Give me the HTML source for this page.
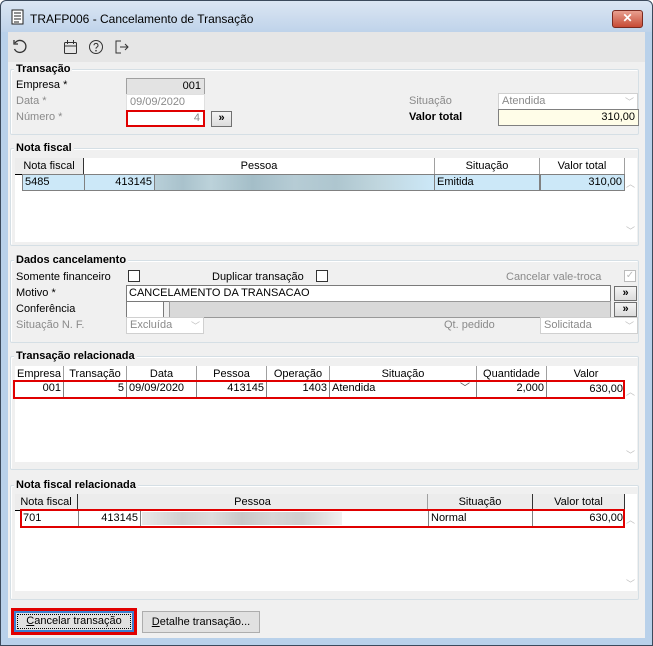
<!DOCTYPE html>
<html><head><meta charset="utf-8"><style>
*{box-sizing:border-box;margin:0;padding:0}
body{width:653px;height:646px;overflow:hidden;background:#fff;font-family:"Liberation Sans",sans-serif;font-size:11px;color:#000;position:relative}
.a{position:absolute}
.win{left:0;top:0;width:653px;height:646px;background:#b9d1ea;border:1px solid #3c4a5c;border-radius:6px 6px 0 0}
.title{left:1px;top:1px;width:651px;height:31px;background:linear-gradient(#dbe6f3,#bfd3ea);border-radius:6px 6px 0 0}
.client{left:8px;top:32px;width:637px;height:606px;background:#f0f0f0}
.tool{left:8px;top:32px;width:637px;height:30px;background:#e6e6e6}
.grp{border:1px solid #d5dfe5;border-radius:2px;box-shadow:inset 1px 1px 0 #fff}
.gt{font-weight:bold;background:#f0f0f0;padding:0 2px;font-size:11px}
.l{white-space:nowrap}
.g{color:#8a8a8a}
.in{background:#fff;border:1px solid #7a7a7a;height:17px;line-height:15px;padding:0 3px;white-space:nowrap;overflow:hidden}
.btn{background:linear-gradient(#f4f4f4,#dcdcdc);border:1px solid #707070;text-align:center;font-weight:bold;line-height:13px;font-size:11px}
.grid{background:#fff}
.h{background:#fff;border-right:1px solid #a0a0a0;text-align:center;height:16px;line-height:16px;white-space:nowrap}
.c{border:1px solid #808080;border-width:1px 1px 1px 0;height:17px;line-height:15px;padding:0 2px;white-space:nowrap}
.r{text-align:right}
.sel{background:#cce8f8}
.blur{background:linear-gradient(90deg,#b8cfd8 0,#a9c2cc 10%,#bcd2da 20%,#a4bec8 35%,#b6ccd5 50%,#aec6cf 65%,#c0d6de 80%,#cce8f8 100%)}
.blurg{background:linear-gradient(90deg,#e8e8e8 0,#d0d0d0 20%,#dcdcdc 35%,#c8c8c8 50%,#d6d6d6 65%,#cfcfcf 80%,#f0f0f0 100%)}
.chk{width:12px;height:12px;border:1px solid #333;background:#fff}
.arr{color:#c0c0c0;font-size:9px}
</style></head><body>
<div class="a win"></div>
<div class="a title"></div>
<svg class="a" style="left:11px;top:9px" width="14" height="16"><rect x="1" y="1" width="11" height="14" fill="#fff" stroke="#222"/><path d="M3 4h7M3 7h7M3 10h7M3 13h5" stroke="#222"/></svg>
<div class="a l" style="left:30px;top:12px;font-size:12px;color:#000">TRAFP006 - Cancelamento de Transação</div>
<div class="a" style="left:612px;top:10px;width:31px;height:18px;background:linear-gradient(#e8a090,#c74a35);border:1px solid #7a2a20;border-radius:3px;color:#fff;text-align:center;font-weight:bold;line-height:15px;font-size:12px">✕</div>
<div class="a client"></div>
<div class="a tool"></div>
<svg class="a" style="left:12px;top:39px" width="16" height="16"><path d="M3 4A6 6 0 1 1 2.5 10" fill="none" stroke="#333" stroke-width="1.3"/><path d="M2 1v4h4" fill="none" stroke="#333" stroke-width="1.3"/></svg>
<svg class="a" style="left:63px;top:39px" width="15" height="16"><rect x="1.5" y="3.5" width="12" height="11" rx="1" fill="none" stroke="#333"/><path d="M1.5 7h12M4.5 1v4M10.5 1v4" stroke="#333"/></svg>
<svg class="a" style="left:88px;top:39px" width="16" height="16"><circle cx="8" cy="8" r="6.5" fill="none" stroke="#333"/><path d="M6 6.3a2 2 0 1 1 2.7 1.9c-.6.3-.7.7-.7 1.5" fill="none" stroke="#333"/><circle cx="8" cy="11.7" r=".8" fill="#333"/></svg>
<svg class="a" style="left:114px;top:39px" width="16" height="16"><path d="M7 2H2v12h5" fill="none" stroke="#333"/><path d="M6 8h8M11 5l3 3-3 3" fill="none" stroke="#333"/></svg>

<!-- Transacao -->
<div class="a grp" style="left:10px;top:69px;width:629px;height:66px"></div>
<div class="a gt" style="left:14px;top:63px">Transação</div>
<div class="a l" style="left:16px;top:79px">Empresa *</div>
<div class="a in r" style="left:126px;top:78px;width:79px;background:#e3e3e3;border-color:#a0a0a0">001</div>
<div class="a l g" style="left:16px;top:95px">Data *</div>
<div class="a in g" style="left:126px;top:94px;width:79px;border-color:#e0e0e0">09/09/2020</div>
<div class="a l g" style="left:16px;top:111px">Número *</div>
<div class="a in r g" style="left:126px;top:110px;width:79px;border:2px solid #e00000;line-height:13px">4</div>
<div class="a btn" style="left:211px;top:111px;width:21px;height:16px">»</div>
<div class="a l g" style="left:409px;top:95px">Situação</div>
<div class="a in g" style="left:498px;top:93px;width:140px;border-color:#d0d0d0">Atendida<span class="a arr" style="right:3px;top:1px">﹀</span></div>
<div class="a l" style="left:409px;top:111px;font-weight:bold">Valor total</div>
<div class="a in r" style="left:498px;top:109px;width:141px;background:#fffde8;border-color:#808080">310,00</div>

<!-- Nota fiscal -->
<div class="a grp" style="left:10px;top:148px;width:629px;height:98px"></div>
<div class="a gt" style="left:14px;top:142px">Nota fiscal</div>
<div class="a grid" style="left:15px;top:158px;width:622px;height:84px"></div>
<div class="a h" style="left:15px;top:158px;width:69px;background:#ececec;border-right:1px solid #333">Nota fiscal</div>
<div class="a h" style="left:84px;top:158px;width:351px">Pessoa</div>
<div class="a h" style="left:435px;top:158px;width:105px">Situação</div>
<div class="a h" style="left:540px;top:158px;width:85px">Valor total</div>
<div class="a" style="left:15px;top:174px;width:7px;height:1px;background:#000"></div>
<div class="a c sel" style="left:22px;top:174px;width:63px;border-left:1px solid #808080">5485</div>
<div class="a c sel r" style="left:85px;top:174px;width:70px">413145</div>
<div class="a c blur" style="left:155px;top:174px;width:280px"></div>
<div class="a c sel" style="left:435px;top:174px;width:105px">Emitida</div>
<div class="a c sel r" style="left:540px;top:174px;width:85px;border-left:1px solid #808080">310,00</div>
<div class="a arr" style="left:626px;top:177px">︿</div>
<div class="a arr" style="left:626px;top:224px">﹀</div>

<!-- Dados cancelamento -->
<div class="a grp" style="left:10px;top:260px;width:629px;height:83px"></div>
<div class="a gt" style="left:14px;top:254px">Dados cancelamento</div>
<div class="a l" style="left:16px;top:271px">Somente financeiro</div>
<div class="a chk" style="left:128px;top:270px"></div>
<div class="a l" style="left:212px;top:271px">Duplicar transação</div>
<div class="a chk" style="left:316px;top:270px"></div>
<div class="a l g" style="left:506px;top:271px">Cancelar vale-troca</div>
<div class="a chk" style="left:624px;top:270px;border-color:#bbb;color:#bbb;font-size:10px;line-height:10px;text-align:center">✓</div>
<div class="a l" style="left:16px;top:287px">Motivo *</div>
<div class="a in" style="left:126px;top:285px;width:485px;padding-left:2px">CANCELAMENTO DA TRANSACAO</div>
<div class="a btn" style="left:614px;top:286px;width:23px;height:15px">»</div>
<div class="a l" style="left:16px;top:303px">Conferência</div>
<div class="a in" style="left:126px;top:301px;width:38px"></div>
<div class="a in" style="left:169px;top:301px;width:442px;background:#d9d9d9;border-color:#999"></div>
<div class="a btn" style="left:614px;top:302px;width:23px;height:15px">»</div>
<div class="a l g" style="left:16px;top:319px">Situação N. F.</div>
<div class="a in g" style="left:126px;top:317px;width:78px;border-color:#d0d0d0">Excluída<span class="a arr" style="right:3px;top:1px">﹀</span></div>
<div class="a l g" style="left:444px;top:319px">Qt. pedido</div>
<div class="a in g" style="left:540px;top:317px;width:98px;border-color:#d0d0d0">Solicitada<span class="a arr" style="right:3px;top:1px">﹀</span></div>

<!-- Transacao relacionada -->
<div class="a grp" style="left:10px;top:356px;width:629px;height:114px"></div>
<div class="a gt" style="left:14px;top:350px">Transação relacionada</div>
<div class="a grid" style="left:15px;top:366px;width:622px;height:96px"></div>
<div class="a h" style="left:15px;top:366px;width:49px">Empresa</div>
<div class="a h" style="left:64px;top:366px;width:63px">Transação</div>
<div class="a h" style="left:127px;top:366px;width:70px">Data</div>
<div class="a h" style="left:197px;top:366px;width:70px">Pessoa</div>
<div class="a h" style="left:267px;top:366px;width:63px">Operação</div>
<div class="a h" style="left:330px;top:366px;width:147px">Situação</div>
<div class="a h" style="left:477px;top:366px;width:70px">Quantidade</div>
<div class="a h" style="left:547px;top:366px;width:78px;border-right:none">Valor</div>
<div class="a c r" style="left:15px;top:381px;width:49px;border-top:none;border-bottom:none">001</div>
<div class="a c r" style="left:64px;top:381px;width:63px;border-top:none;border-bottom:none">5</div>
<div class="a c" style="left:127px;top:381px;width:70px;border-top:none;border-bottom:none">09/09/2020</div>
<div class="a c r" style="left:197px;top:381px;width:70px;border-top:none;border-bottom:none">413145</div>
<div class="a c r" style="left:267px;top:381px;width:63px;border-top:none;border-bottom:none">1403</div>
<div class="a c" style="left:330px;top:381px;width:147px;border-top:none;border-bottom:none;line-height:14px">Atendida<span class="a" style="right:6px;top:1px;color:#444;font-size:10px">﹀</span></div>
<div class="a c r" style="left:477px;top:381px;width:70px;border-top:none;border-bottom:none">2,000</div>
<div class="a c r" style="left:547px;top:381px;width:78px;border:none;line-height:16px">630,00</div>
<div class="a" style="left:13px;top:380px;width:612px;height:19px;border:2px solid #e00000"></div>
<div class="a arr" style="left:626px;top:385px">︿</div>
<div class="a arr" style="left:626px;top:448px">﹀</div>

<!-- Nota fiscal relacionada -->
<div class="a grp" style="left:10px;top:485px;width:629px;height:115px"></div>
<div class="a gt" style="left:14px;top:479px">Nota fiscal relacionada</div>
<div class="a grid" style="left:15px;top:494px;width:622px;height:97px"></div>
<div class="a h" style="left:15px;top:494px;width:63px;background:#ececec;border-right:1px solid #333">Nota fiscal</div>
<div class="a h" style="left:78px;top:494px;width:350px;background:#ececec">Pessoa</div>
<div class="a h" style="left:428px;top:494px;width:105px;background:#ececec;border-right:1px solid #333">Situação</div>
<div class="a h" style="left:533px;top:494px;width:92px;background:#ececec;border-right:1px solid #333">Valor total</div>
<div class="a" style="left:15px;top:510px;width:6px;height:1px;background:#000"></div>
<div class="a c" style="left:21px;top:511px;width:57px;border:none;line-height:15px">701</div>
<div class="a c r" style="left:78px;top:511px;width:63px;border-top:none;border-bottom:none;border-left:1px solid #808080">413145</div>
<div class="a blurg" style="left:142px;top:512px;width:200px;height:13px"></div>
<div class="a c" style="left:428px;top:511px;width:105px;border-top:none;border-bottom:none;border-left:1px solid #808080">Normal</div>
<div class="a c r" style="left:533px;top:511px;width:92px;border:none;line-height:15px">630,00</div>
<div class="a" style="left:20px;top:509px;width:605px;height:19px;border:2px solid #e00000"></div>
<div class="a arr" style="left:626px;top:513px">︿</div>
<div class="a arr" style="left:626px;top:577px">﹀</div>

<!-- buttons -->
<div class="a" style="left:11px;top:608px;width:126px;height:27px;border:3px solid #e00000"></div>
<div class="a" style="left:14px;top:611px;width:120px;height:21px;border:2px solid #3c7fd0;background:#e1e1e1;text-align:center;line-height:17px;outline:1px dotted #000;outline-offset:-4px"><u>C</u>ancelar transação</div>
<div class="a" style="left:142px;top:611px;width:118px;height:22px;border:1px solid #adadad;background:#e1e1e1;text-align:center;line-height:20px"><u>D</u>etalhe transação...</div>
</body></html>
